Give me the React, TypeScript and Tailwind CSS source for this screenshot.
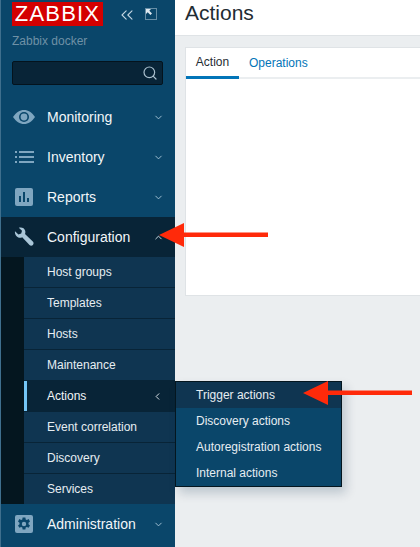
import React from "react";
import { ChevronDown, ChevronUp, ChevronLeft, Search, ChevronsLeft } from "lucide-react";

const subItems = ["Host groups", "Templates", "Hosts", "Maintenance", "Actions", "Event correlation", "Discovery", "Services"];
const flyItems = ["Trigger actions", "Discovery actions", "Autoregistration actions", "Internal actions"];

const EyeIcon = () => (
  <svg width="22" height="14" viewBox="0 0 22 14">
    <path d="M0 7 C3 2.5 6.8 0 11 0 S19 2.5 22 7 C19 11.5 15.2 14 11 14 S3 11.5 0 7 Z" fill="#7fa6c0" />
    <circle cx="11" cy="7" r="5" fill="#0a466a" />
    <circle cx="11" cy="7" r="3.4" fill="#7fa6c0" />
  </svg>
);

const ListIcon = () => (
  <svg width="19" height="14" viewBox="0 0 19 14" fill="#7fa6c0">
    <rect x="0" y="1" width="2" height="2" />
    <rect x="4" y="1" width="15" height="2" />
    <rect x="0" y="6" width="2" height="2" />
    <rect x="4" y="6" width="15" height="2" />
    <rect x="0" y="11" width="2" height="2" />
    <rect x="4" y="11" width="15" height="2" />
  </svg>
);

const ReportsIcon = () => (
  <svg width="18" height="18" viewBox="0 0 18 18">
    <rect width="18" height="18" rx="2" fill="#7fa6c0" />
    <rect x="4" y="8" width="2" height="6" fill="#0a466a" />
    <rect x="8" y="4" width="2" height="10" fill="#0a466a" />
    <rect x="12" y="10" width="2" height="4" fill="#0a466a" />
  </svg>
);

const WrenchIcon = () => (
  <svg width="20" height="20" viewBox="0 0 20 20" fill="#a9c6d8">
    <path d="M1 4.2 L4.4 7.4 L7.2 6.6 L8 3.8 L4.8 .8 C7.4 -.2 10.6 1 11.2 3.8 C11.5 5 11.4 6 11 7 L18.8 14.6 C19.8 15.6 19.8 17 18.9 18 C17.9 19 16.4 19 15.5 18 L8.2 10.2 C7 10.8 5.6 10.9 4.3 10.4 C1.8 9.5 .5 6.8 1 4.2 Z" />
  </svg>
);

const GearIcon = () => (
  <svg width="18" height="18" viewBox="0 0 18 18">
    <rect width="18" height="18" rx="2" fill="#7fa6c0" />
    <path
      fill="#0a466a"
      fillRule="evenodd"
      d="M7.6 2.5h2.8l.3 1.9 1.2.6 1.7-.9 1.4 2.4-1.5 1.2v1.5l1.5 1.2-1.4 2.4-1.7-.9-1.2.6-.3 1.9H7.6l-.3-1.9-1.2-.6-1.7.9-1.4-2.4 1.5-1.2V7.7L3 6.5l1.4-2.4 1.7.9 1.2-.6zM9 6.8a2.2 2.2 0 1 0 0 4.4 2.2 2.2 0 0 0 0-4.4z"
    />
  </svg>
);

const FullscreenIcon = () => (
  <svg width="12" height="12" viewBox="0 0 12 12" fill="none">
    <rect x=".5" y=".5" width="11" height="11" stroke="#c4d6e2" strokeDasharray="1 1" />
    <path d="M1 1h5L4.3 2.7 7 5.4 5.4 7 2.7 4.3 1 6z" fill="#dfe9f0" />
  </svg>
);

// red annotation arrow laid over the screenshot, tip points left
const Arrow = ({ className, length }: { className: string; length: number }) => (
  <svg className={className} width={length} height="24" viewBox={`0 0 ${length} 24`}>
    <path d={`M0 12 L25 0 V9.5 H${length} V14 H25 V24 Z`} fill="#ff2a0a" />
  </svg>
);

const MainRow = ({ icon, label, active }: { icon: React.ReactNode; label: string; active?: boolean }) => (
  <div className={`flex h-10 items-center ${active ? "bg-[#082437]" : ""}`}>
    <div className="flex w-[46px] shrink-0 justify-center">{icon}</div>
    <span className="flex-1 text-sm text-[#f2f6f9]">{label}</span>
    {active ? (
      <ChevronUp size={11} className="mr-[11px] text-[#d5e2ea]" />
    ) : (
      <ChevronDown size={11} className="mr-[11px] text-[#a9c6d8]" />
    )}
  </div>
);

export default function App() {
  return (
    <div className="relative flex h-[547px] w-[420px] overflow-hidden bg-[#ebeef0] font-['Liberation_Sans',Arial,sans-serif]">
      <aside className="w-[175px] shrink-0 border-l border-[#3f6f8d] bg-[#0a466a]">
        <div className="flex h-[97px] flex-col px-[11px] pt-[2px]">
          <div className="flex items-start">
            <div className="flex h-[24px] w-[91px] items-center justify-center bg-[#d40000] text-[22px] leading-none tracking-[1.2px] text-white">
              ZABBIX
            </div>
            <ChevronsLeft size={20} strokeWidth={1.3} className="ml-[14px] mt-[3px] text-[#c4d6e2]" />
            <div className="ml-[8px] mt-[6px]">
              <FullscreenIcon />
            </div>
          </div>
          <div className="mt-[7px] text-xs leading-[16px] text-[#6f91a6]">Zabbix docker</div>
          <div className="mt-[12px] flex h-[24px] w-[151px] items-center justify-end rounded-[2px] border border-[#04131d] bg-[#082437] pr-[4px]">
            <Search size={16} strokeWidth={1.8} className="text-[#a9bfcd]" />
          </div>
        </div>
        <MainRow icon={<EyeIcon />} label="Monitoring" />
        <MainRow icon={<ListIcon />} label="Inventory" />
        <MainRow icon={<ReportsIcon />} label="Reports" />
        <MainRow icon={<WrenchIcon />} label="Configuration" active />
        <div className="flex bg-[#04161f]">
          <div className="w-[23px] shrink-0" />
          <div className="flex-1">
            {subItems.map((item) =>
              item === "Actions" ? (
                <div key={item} className="flex h-[31px] items-center border-b border-[#082437] bg-[#082437] pr-[12px]">
                  <div className="h-full w-[3px] bg-[#74c5f5]" />
                  <span className="ml-[20px] flex-1 text-xs text-[#f2f6f9]">{item}</span>
                  <ChevronLeft size={11} strokeWidth={2} className="text-[#e8eff4]" />
                </div>
              ) : (
                <div key={item} className="flex h-[31px] items-center border-b border-[#082437] bg-[#0f3551] pl-[23px] text-xs text-[#e6edf2] last:h-[30px] last:border-b-0">
                  {item}
                </div>
              )
            )}
          </div>
        </div>
        <MainRow icon={<GearIcon />} label="Administration" />
      </aside>

      <main className="flex min-w-0 flex-1 flex-col">
        <header className="flex h-[36px] items-start border-b border-[#dfe3e6] bg-white pl-[10px]">
          <h1 className="text-[21px] leading-[26px] text-[#1f2c33]">Actions</h1>
        </header>
        <div className="ml-[10px] mt-[11px] h-[249px] border border-r-0 border-[#dfe3e6] bg-white">
          <div className="flex h-[31px] border-b-2 border-[#ebeef0] text-xs">
            <div className="-mb-[2px] flex h-[31px] w-[53px] items-center justify-center border-b-[3px] border-[#0275b8] text-[#1f2c33]">
              Action
            </div>
            <div className="ml-[10px] flex items-center text-[#0275b8]">Operations</div>
          </div>
        </div>
      </main>

      {/* flyout submenu over the page */}
      <div className="absolute left-[175px] top-[381px] w-[167px] border border-[#04161f] bg-[#0a466a] shadow-[4px_6px_10px_rgba(0,40,70,0.2)]">
        {flyItems.map((item, i) => (
          <div
            key={item}
            className={`flex h-[26px] items-center pl-[20px] text-xs text-[#e6edf2] ${i === 0 ? "bg-[#0f3551]" : ""}`}
          >
            {item}
          </div>
        ))}
      </div>

      {/* annotation arrows */}
      <Arrow className="absolute left-[159px] top-[223px]" length={109} />
      <Arrow className="absolute left-[303px] top-[381px]" length={109} />
    </div>
  );
}
